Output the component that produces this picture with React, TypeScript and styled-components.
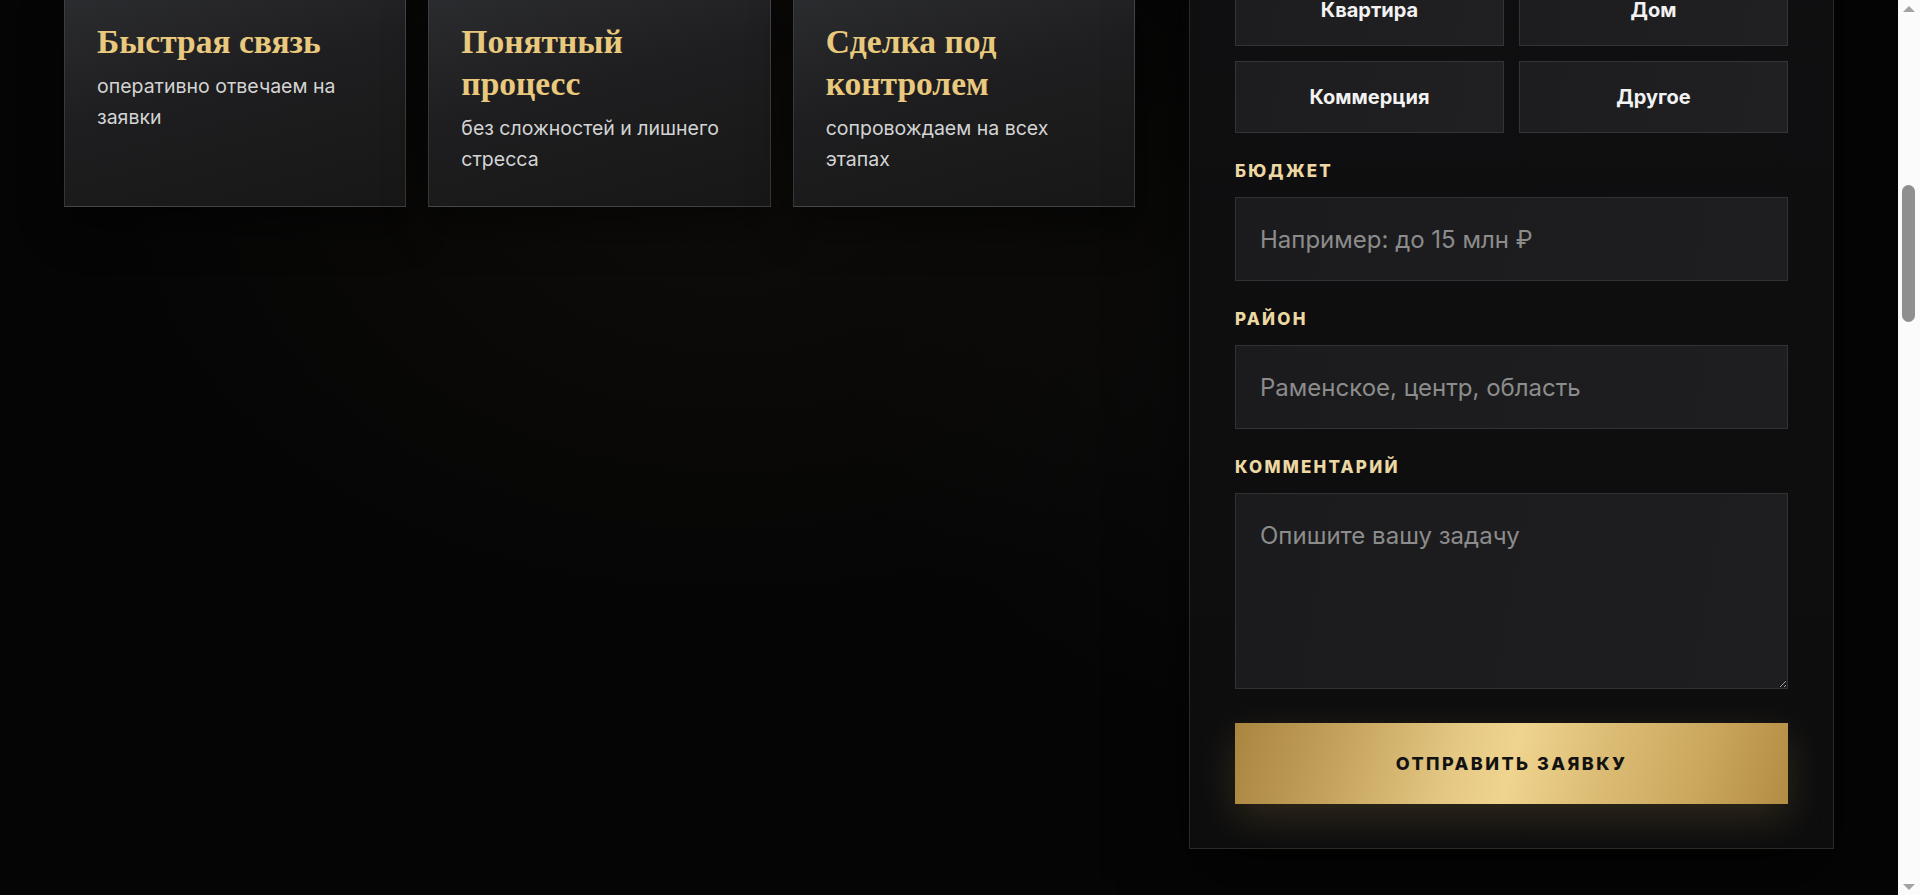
import React, { useLayoutEffect, useRef, useState } from "react";
import styled, { createGlobalStyle } from "styled-components";

const GlobalStyle = createGlobalStyle`
  *, *::before, *::after { box-sizing: border-box; }
  html { scrollbar-width: none; }
  html::-webkit-scrollbar { display: none; }
  body {
    margin: 0;
    background: #050505;
    color: #e6e6e6;
    font-family: Inter, "Noto Sans", Arial, sans-serif;
    -webkit-font-smoothing: antialiased;
  }
  button, input, textarea { font-family: inherit; }
`;

/* ---------- page shell ---------- */

const Page = styled.div`
  min-height: 5651px;
  display: flex;
  flex-direction: column;
  background:
    radial-gradient(ellipse 900px 600px at 38% 1300px, rgba(38, 31, 22, 0.28), transparent 70%),
    radial-gradient(ellipse 700px 500px at 70% 1500px, rgba(30, 28, 26, 0.25), transparent 70%),
    #050505;
`;

const Header = styled.header`
  height: 88px;
  padding: 0 86px 0 64px;
  display: flex;
  align-items: center;
  justify-content: space-between;
  border-bottom: 1px solid rgba(255, 255, 255, 0.06);
`;

const Brand = styled.div`
  font-family: "Liberation Serif", serif;
  font-size: 28px;
  color: #e8c67c;
  letter-spacing: 0.04em;
`;

const Nav = styled.nav`
  display: flex;
  gap: 40px;
  font-size: 15px;
  color: #bdbdbd;
`;

/* ---------- custom scroll rail ---------- */

const Rail = styled.div`
  position: fixed;
  top: 0;
  right: 0;
  width: 22px;
  height: 100vh;
  display: flex;
  flex-direction: column;
  background: #fbfbfb;
  z-index: 10;
`;

const RailArrow = styled.div<{ $down?: boolean }>`
  height: 17px;
  display: flex;
  align-items: center;
  justify-content: center;
  &::before {
    content: "";
    border-left: 6px solid transparent;
    border-right: 6px solid transparent;
    ${(p) =>
      p.$down ? "border-top: 6px solid #a3a3a3;" : "border-bottom: 6px solid #a3a3a3;"}
  }
`;

const RailTrack = styled.div`
  position: relative;
  flex: 1;
`;

const RailThumb = styled.div`
  position: absolute;
  left: 4px;
  right: 5px;
  border-radius: 7px;
  background: #8f8f8f;
`;

/* ---------- lead section ---------- */

const Lead = styled.section`
  padding: 168px 0 120px 64px;
`;

const LeadHead = styled.div`
  display: flex;
  flex-direction: column;
  margin-bottom: 185px;
`;

const Eyebrow = styled.div`
  font-size: 14px;
  line-height: 20px;
  font-weight: 700;
  letter-spacing: 0.18em;
  text-transform: uppercase;
  color: #d9bd7a;
`;

const SectionTitle = styled.h2`
  margin: 18px 0 20px;
  font-family: "Liberation Serif", serif;
  font-weight: 400;
  font-size: 54px;
  line-height: 64px;
  white-space: nowrap;
  color: #f1e2bb;
`;

const SectionSub = styled.p`
  margin: 0;
  font-size: 19px;
  line-height: 30px;
  white-space: nowrap;
  color: #a9a9a9;
`;

const LeadGrid = styled.div`
  width: 1770px;
  display: grid;
  grid-template-columns: 1071px 645px;
  column-gap: 54px;
  align-items: start;
`;

/* ---------- left column ---------- */

const Intro = styled.div`
  display: flex;
  flex-direction: column;
`;

const IntroTitle = styled.h3`
  margin: 24px 0 28px;
  font-family: "Liberation Serif", serif;
  font-weight: 400;
  font-size: 52px;
  line-height: 64px;
  white-space: nowrap;
  color: #e8c67c;
`;

const IntroText = styled.p`
  margin: 0 0 56px;
  font-size: 19px;
  line-height: 32px;
  white-space: nowrap;
  color: #cfcfcf;
`;

const Stats = styled.div`
  display: flex;
  gap: 56px;
  margin-bottom: 69px;
`;

const Stat = styled.div`
  display: flex;
  flex-direction: column;
  gap: 6px;
`;

const StatValue = styled.div`
  font-family: "Liberation Serif", serif;
  font-size: 40px;
  line-height: 48px;
  color: #e8c67c;
`;

const StatCaption = styled.div`
  font-size: 15px;
  line-height: 24px;
  color: #9c9c9c;
`;

const Cards = styled.div`
  display: grid;
  grid-template-columns: repeat(3, 1fr);
  gap: 22px;
`;

const Card = styled.article`
  padding: 32px 32px 31px;
  border: 1px solid rgba(255, 255, 255, 0.13);
  background: linear-gradient(165deg, #2c2d30 0%, #1e1e20 45%, #171717 100%);
  box-shadow: 0 20px 40px rgba(0, 0, 0, 0.45);
`;

const CardTitle = styled.h4`
  margin: 0 0 8px;
  font-family: "Liberation Serif", serif;
  font-weight: 700;
  font-size: 33.5px;
  line-height: 42px;
  color: #e9c97d;
`;

const CardText = styled.p`
  margin: 0;
  font-size: 19.5px;
  line-height: 31px;
  color: #d4d4d4;
`;

/* ---------- form panel ---------- */

const Panel = styled.div`
  padding: 44px 45px;
  border: 1px solid #2a2a2c;
  background: linear-gradient(180deg, #101012 0%, #0d0d0e 100%);
  box-shadow: 0 30px 60px rgba(0, 0, 0, 0.55);
`;

const Form = styled.form`
  display: flex;
  flex-direction: column;
  gap: 28px;
`;

const FormHead = styled.div`
  display: flex;
  flex-direction: column;
  gap: 10px;
  margin-bottom: 4px;
`;

const FormTitle = styled.h3`
  margin: 0;
  font-family: "Liberation Serif", serif;
  font-weight: 400;
  font-size: 32px;
  line-height: 40px;
  color: #e9c97d;
`;

const FormNote = styled.p`
  margin: 0;
  font-size: 16px;
  line-height: 26px;
  white-space: nowrap;
  color: #9a9a9a;
`;

const Field = styled.div`
  display: flex;
  flex-direction: column;
  gap: 16px;
`;

const Label = styled.label`
  font-size: 17px;
  line-height: 20px;
  font-weight: 800;
  letter-spacing: 0.13em;
  text-transform: uppercase;
  color: #ecd8a2;
`;

const fieldBox = `
  width: 100%;
  border: 1px solid #323234;
  border-radius: 0;
  background: linear-gradient(100deg, #1b1b1d 0%, #1e1e20 100%);
  color: #f0f0f0;
  font-size: 24px;
  outline: none;
  &::placeholder { color: #8c8c8c; }
`;

const Input = styled.input`
  ${fieldBox}
  height: 84px;
  padding: 0 24px;
`;

const TextArea = styled.textarea`
  ${fieldBox}
  display: block;
  height: 196px;
  padding: 26px 24px;
  line-height: 32px;
  resize: vertical;
`;

const TypeGrid = styled.div`
  display: grid;
  grid-template-columns: 1fr 1fr;
  gap: 15px;
`;

const TypeButton = styled.button<{ $active?: boolean }>`
  height: 72px;
  border: 1px solid ${(p) => (p.$active ? "#c9a55a" : "#343436")};
  background: linear-gradient(100deg, #1d1d1f 0%, #202022 100%);
  color: #f2f2f2;
  font-size: 20px;
  font-weight: 700;
  cursor: pointer;
`;

const Submit = styled.button`
  margin-top: 6px;
  height: 81px;
  border: 0;
  background: linear-gradient(
    105deg,
    #a9853f 0%,
    #c6a45d 20%,
    #e4c884 40%,
    #efd48f 50%,
    #dcbc74 66%,
    #c9a65c 84%,
    #b28c42 100%
  );
  box-shadow: 0 14px 40px rgba(196, 160, 84, 0.2);
  color: #121212;
  font-size: 18px;
  font-weight: 800;
  letter-spacing: 0.135em;
  text-transform: uppercase;
  cursor: pointer;
`;

const Footer = styled.footer`
  flex: 1;
  border-top: 1px solid rgba(255, 255, 255, 0.04);
  background: #050505;
`;

const features = [
  { title: "Быстрая связь", text: "оперативно отвечаем на заявки" },
  { title: "Понятный процесс", text: "без сложностей и лишнего стресса" },
  { title: "Сделка под контролем", text: "сопровождаем на всех этапах" },
];

const types = ["Квартира", "Дом", "Коммерция", "Другое"];

const ARROW = 17;

function ScrollRail() {
  const [thumb, setThumb] = useState({ top: 0, height: 0 });

  useLayoutEffect(() => {
    const update = () => {
      const doc = document.documentElement;
      const view = window.innerHeight;
      const total = doc.scrollHeight;
      const track = view - ARROW * 2;
      const height = Math.max(24, (track * view) / total);
      const max = Math.max(1, total - view);
      const top = (window.scrollY / max) * (track - height);
      setThumb({ top, height });
    };
    update();
    window.addEventListener("scroll", update);
    window.addEventListener("resize", update);
    return () => {
      window.removeEventListener("scroll", update);
      window.removeEventListener("resize", update);
    };
  }, []);

  return (
    <Rail aria-hidden>
      <RailArrow />
      <RailTrack>
        <RailThumb style={{ top: thumb.top, height: thumb.height }} />
      </RailTrack>
      <RailArrow $down />
    </Rail>
  );
}

export default function App() {
  const cardsRef = useRef<HTMLDivElement>(null);

  useLayoutEffect(() => {
    const el = cardsRef.current;
    if (!el) return;
    const top = el.getBoundingClientRect().top + window.scrollY;
    window.scrollTo(0, top + 12);
  }, []);

  return (
    <>
      <GlobalStyle />
      <Page>
        <Header>
          <Brand>Раменское Недвижимость</Brand>
          <Nav>
            <span>Услуги</span>
            <span>Объекты</span>
            <span>О нас</span>
            <span>Контакты</span>
          </Nav>
        </Header>

        <Lead>
          <LeadHead>
            <Eyebrow>Заявка</Eyebrow>
            <SectionTitle>Подберём недвижимость под вашу задачу</SectionTitle>
            <SectionSub>Расскажите, что ищете, — мы свяжемся с вами и предложим варианты.</SectionSub>
          </LeadHead>

          <LeadGrid>
            <Intro>
              <Eyebrow>Почему мы</Eyebrow>
              <IntroTitle>
                Спокойная сделка
                <br />
                без лишних хлопот
              </IntroTitle>
              <IntroText>
                Работаем с квартирами, домами и коммерческими объектами.
                <br />
                Проверяем документы, ведём переговоры и сопровождаем
                <br />
                сделку до получения ключей.
              </IntroText>
              <Stats>
                <Stat>
                  <StatValue>12 лет</StatValue>
                  <StatCaption>на рынке</StatCaption>
                </Stat>
                <Stat>
                  <StatValue>850+</StatValue>
                  <StatCaption>закрытых сделок</StatCaption>
                </Stat>
                <Stat>
                  <StatValue>24/7</StatValue>
                  <StatCaption>на связи</StatCaption>
                </Stat>
              </Stats>

              <Cards ref={cardsRef}>
                {features.map((f) => (
                  <Card key={f.title}>
                    <CardTitle>{f.title}</CardTitle>
                    <CardText>{f.text}</CardText>
                  </Card>
                ))}
              </Cards>
            </Intro>

            <Panel>
              <Form onSubmit={(e) => e.preventDefault()}>
                <FormHead>
                  <FormTitle>Оставить заявку</FormTitle>
                  <FormNote>Ответим в течение 15 минут в рабочее время</FormNote>
                </FormHead>

                <Field>
                  <Label htmlFor="name">Имя</Label>
                  <Input id="name" placeholder="Как к вам обращаться" />
                </Field>

                <Field>
                  <Label htmlFor="phone">Телефон</Label>
                  <Input id="phone" placeholder="+7 (___) ___-__-__" />
                </Field>

                <Field>
                  <Label as="span">Тип недвижимости</Label>
                  <TypeGrid>
                    {types.map((t) => (
                      <TypeButton key={t} type="button">
                        {t}
                      </TypeButton>
                    ))}
                  </TypeGrid>
                </Field>

                <Field>
                  <Label htmlFor="budget">Бюджет</Label>
                  <Input id="budget" placeholder="Например: до 15 млн ₽" />
                </Field>

                <Field>
                  <Label htmlFor="area">Район</Label>
                  <Input id="area" placeholder="Раменское, центр, область" />
                </Field>

                <Field>
                  <Label htmlFor="comment">Комментарий</Label>
                  <TextArea id="comment" placeholder="Опишите вашу задачу" />
                </Field>

                <Submit type="submit">Отправить заявку</Submit>
              </Form>
            </Panel>
          </LeadGrid>
        </Lead>

        <Footer />
      </Page>
      <ScrollRail />
    </>
  );
}
